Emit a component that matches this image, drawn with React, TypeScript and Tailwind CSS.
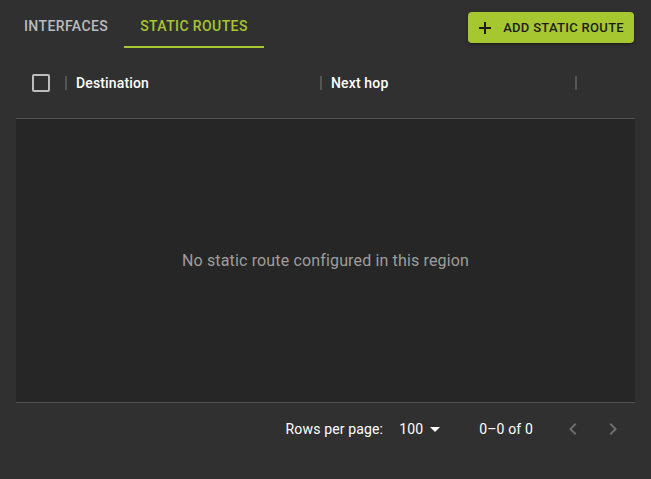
import React from "react";

function Separator() {
  return <div className="absolute right-[-1px] top-1/2 -translate-y-1/2 w-[2px] h-[14px] bg-[#555555]" />;
}

export default function App() {
  return (
    <div className="w-[651px] h-[479px] bg-[#303030] font-['Roboto',sans-serif] text-white overflow-hidden">
      {/* top row */}
      <div className="flex items-start justify-between h-12">
        <div className="flex pl-2 h-12">
          <div className="relative px-4 h-12 flex items-center pt-[5px] text-[14px] font-medium uppercase tracking-[0.4px] text-[#b9bcc0]">
            Interfaces
          </div>
          <div className="relative px-4 h-12 flex items-center pt-[5px] text-[14px] font-medium uppercase tracking-[0.4px] text-[#a6c730]">
            Static routes
            <div className="absolute left-0 right-0 bottom-0 h-[2px] bg-[#a6c730]" />
          </div>
        </div>
        <button className="mt-3 mr-[17px] h-[31px] flex items-center gap-3 pl-[11px] pr-[10px] rounded bg-[#a6c730] text-[#1c1c1c] text-[13px] font-medium uppercase tracking-[0.3px] shadow-[0_3px_1px_-2px_rgba(0,0,0,0.2),0_2px_2px_0_rgba(0,0,0,0.14),0_1px_5px_0_rgba(0,0,0,0.12)]">
          <svg width="12" height="12" viewBox="0 0 12 12">
            <path d="M5 0h2v12H5z M0 5h12v2H0z" fill="#1c1c1c" />
          </svg>
          <span>Add static route</span>
        </button>
      </div>

      {/* table */}
      <div className="mx-4">
        <div className="flex items-center h-[71px] border-b border-[#515151] tracking-[0.15px]">
          <div className="relative w-[50px] h-full flex items-center pl-4">
            <div className="w-[18px] h-[18px] border-2 border-[#bdbdbd] rounded-[2px]" />
            <Separator />
          </div>
          <div className="relative w-[255px] h-full flex items-center pl-[10px] text-[14px] font-medium">
            Destination
            <Separator />
          </div>
          <div className="relative w-[255px] h-full flex items-center pl-[10px] text-[14px] font-medium">
            Next hop
            <Separator />
          </div>
        </div>
        <div className="h-[284px] bg-[#262626] border-b border-[#515151] flex items-center justify-center">
          <span className="text-[16px] tracking-[0.15px] text-[#9e9e9e]">No static route configured in this region</span>
        </div>
        <div className="flex items-center justify-end h-[52px] pr-[2px] text-[14px] tracking-[0.15px]">
          <span>Rows per page:</span>
          <div className="relative ml-2 mr-8 pl-2 pr-6">
            <span>100</span>
            <svg className="absolute right-0 top-1/2 -translate-y-1/2" width="24" height="24" viewBox="0 0 24 24">
              <path d="M7 10l5 5 5-5z" fill="#ffffff" />
            </svg>
          </div>
          <span>0–0 of 0</span>
          <div className="ml-5 flex">
            <div className="w-10 h-10 flex items-center justify-center">
              <svg width="24" height="24" viewBox="0 0 24 24">
                <path d="M15.41 7.41L14 6l-6 6 6 6 1.41-1.41L10.83 12z" fill="rgba(255,255,255,0.3)" />
              </svg>
            </div>
            <div className="w-10 h-10 flex items-center justify-center">
              <svg width="24" height="24" viewBox="0 0 24 24">
                <path d="M10 6L8.59 7.41 13.17 12l-4.58 4.59L10 18l6-6z" fill="rgba(255,255,255,0.3)" />
              </svg>
            </div>
          </div>
        </div>
      </div>
    </div>
  );
}
